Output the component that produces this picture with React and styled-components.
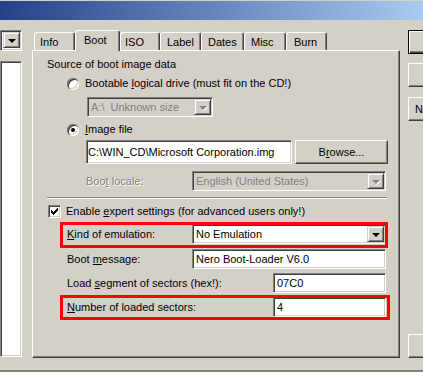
import React from 'react';
import styled, { createGlobalStyle, css } from 'styled-components';

const GlobalStyle = createGlobalStyle`
  html, body {
    margin: 0;
    padding: 0;
    background: #d4d0c8;
    overflow: hidden;
  }
  body {
    font-family: "Liberation Sans", Arial, sans-serif;
    font-size: 11px;
    color: #000;
  }
  * { box-sizing: border-box; }
`;

const sunken = css`
  border: 1px solid;
  border-color: #808080 #fff #fff #808080;
  box-shadow: inset 1px 1px #404040, inset -1px -1px #d4d0c8;
`;

const raised = css`
  border: 1px solid;
  border-color: #fff #404040 #404040 #fff;
  box-shadow: inset -1px -1px #808080;
`;

const Window = styled.div`
  width: 423px;
  height: 372px;
  display: flex;
  flex-direction: column;
  overflow: hidden;
`;

const TitleBar = styled.div`
  height: 20px;
  flex: none;
  border-top: 1px solid #d4d0c8;
  background: linear-gradient(to right, #24428a, #a6caf0);
`;

const Body = styled.div`
  display: flex;
  flex: none;
  padding-top: 10px;
`;

const Sidebar = styled.div`
  width: 22px;
  flex: none;
  display: flex;
  flex-direction: column;
`;

const DriveCombo = styled.div`
  ${sunken};
  height: 21px;
  padding: 1px;
  background: #fff;
  display: flex;
  justify-content: flex-end;
`;

const FileList = styled.div`
  ${sunken};
  flex: 1;
  margin-top: 10px;
  margin-bottom: 1px;
  background: #fff;
`;

const TabArea = styled.div`
  width: 368px;
  margin-left: 10px;
  flex: none;
  display: flex;
  flex-direction: column;
`;

const TabStrip = styled.div`
  height: 20px;
  display: flex;
  align-items: flex-end;
  padding-left: 2px;
  position: relative;
  z-index: 1;
`;

const Tab = styled.div`
  width: ${p => p.$w}px;
  height: ${p => (p.$active ? 21 : 18)}px;
  margin-bottom: ${p => (p.$active ? -1 : 0)}px;
  padding-left: ${p => p.$pad}px;
  padding-top: ${p => (p.$active ? 0 : 1)}px;
  padding-bottom: ${p => (p.$active ? 2 : 0)}px;
  display: flex;
  align-items: center;
  background: #d4d0c8;
  border: 1px solid;
  border-bottom: none;
  border-color: #fff #404040 transparent #fff;
  border-radius: 3px 3px 0 0;
  box-shadow: inset -1px 0 #808080;
  white-space: nowrap;
`;

const Panel = styled.div`
  height: 308px;
  border: 1px solid;
  border-color: #fff #404040 #404040 #fff;
  box-shadow: inset -1px -1px #808080;
  padding: 7px 11px 0 14px;
  display: flex;
  flex-direction: column;
`;

const Caption = styled.div`
  height: 13px;
  line-height: 13px;
`;

const Row = styled.div`
  position: relative;
  display: flex;
  align-items: center;
  margin-top: ${p => p.$top || 0}px;
  padding-left: ${p => p.$indent || 0}px;
  min-height: 13px;
  line-height: 13px;
  ${p => p.$mark && css`
    &::after {
      content: '';
      position: absolute;
      left: 13px;
      right: ${p.$mark.right}px;
      top: -2px;
      bottom: ${p.$mark.bottom}px;
      border: 3px solid #ff0000;
      pointer-events: none;
    }
  `}
`;

const Label = styled.span`
  width: ${p => (p.$w ? `${p.$w}px` : 'auto')};
  flex: none;
  white-space: nowrap;
  color: ${p => (p.$disabled ? '#808080' : '#000')};
  text-shadow: ${p => (p.$disabled ? '1px 1px 0 #fff' : 'none')};
`;

const Radio = styled.span`
  width: 12px;
  height: 12px;
  flex: none;
  margin-right: 6px;
  border-radius: 50%;
  background: #fff;
  position: relative;
  box-shadow: inset 1px 1px #808080, inset 2px 2px #404040,
    inset -1px -1px #fff, inset -2px -2px #d4d0c8;
  ${p => p.$checked && css`
    &::after {
      content: '';
      position: absolute;
      left: 4px;
      top: 4px;
      width: 4px;
      height: 4px;
      border-radius: 50%;
      background: #000;
    }
  `}
`;

const CheckBox = styled.span`
  ${sunken};
  width: 13px;
  height: 13px;
  flex: none;
  margin-right: 5px;
  background: #fff;
  display: flex;
`;

const Combo = styled.div`
  ${sunken};
  width: ${p => p.$w}px;
  height: 20px;
  flex: none;
  margin-left: ${p => p.$left || 0}px;
  padding: 1px;
  display: flex;
  align-items: center;
  background: ${p => (p.$disabled ? '#d4d0c8' : '#fff')};
`;

const ComboText = styled.span`
  flex: 1;
  padding-left: 2px;
  white-space: nowrap;
  overflow: hidden;
  color: ${p => (p.$disabled ? '#808080' : '#000')};
`;

const DropButton = styled.span`
  width: 17px;
  height: 16px;
  flex: none;
  display: flex;
  align-items: center;
  justify-content: center;
  background: #d4d0c8;
  border: 1px solid;
  border-color: #d4d0c8 #404040 #404040 #d4d0c8;
  box-shadow: inset 1px 1px #fff, inset -1px -1px #808080;
  &::before {
    content: '';
    width: 0;
    height: 0;
    margin-left: 1px;
    margin-top: 1px;
    border-left: 4px solid transparent;
    border-right: 4px solid transparent;
    border-top: 4px solid ${p => (p.$disabled ? '#808080' : '#000')};
    filter: ${p => (p.$disabled ? 'drop-shadow(1px 1px 0 #fff)' : 'none')};
  }
`;

const TextField = styled.div`
  ${sunken};
  width: ${p => p.$w}px;
  height: ${p => p.$h || 20}px;
  flex: none;
  padding: 0 ${p => p.$pad ?? 3}px;
  display: flex;
  align-items: center;
  background: #fff;
  white-space: nowrap;
  overflow: hidden;
`;

const PushButton = styled.div`
  ${raised};
  width: ${p => p.$w || 80}px;
  height: ${p => p.$h || 24}px;
  flex: none;
  margin-left: ${p => p.$left || 0}px;
  margin-top: ${p => (p.$top === 'auto' ? 'auto' : `${p.$top || 0}px`)};
  display: flex;
  align-items: center;
  justify-content: ${p => (p.$start ? 'flex-start' : 'center')};
  padding-left: ${p => (p.$start ? 6 : 0)}px;
  background: #d4d0c8;
  white-space: nowrap;
  ${p => p.$default && css`
    border-color: #000;
    box-shadow: inset 1px 1px #fff, inset -1px -1px #404040, inset -2px -2px #808080;
  `}
`;

const Separator = styled.div`
  width: 340px;
  margin-top: 6px;
  border-top: 1px solid #808080;
  border-bottom: 1px solid #fff;
`;

const ButtonColumn = styled.div`
  width: 80px;
  margin-left: 8px;
  flex: none;
  display: flex;
  flex-direction: column;
`;

const StatusLine = styled.div`
  height: 2px;
  margin-top: 12px;
  flex: none;
  background: #808080;
`;

const tabs = [
  { name: 'Info', w: 41, pad: 5 },
  { name: 'Boot', w: 45, pad: 8, active: true },
  { name: 'ISO', w: 40, pad: 4 },
  { name: 'Label', w: 41, pad: 6 },
  { name: 'Dates', w: 43, pad: 6 },
  { name: 'Misc', w: 42, pad: 6 },
  { name: 'Burn', w: 41, pad: 7 },
];

function CheckMark() {
  // classic 7x7 pixel tick
  const cols = [[2, 4], [3, 5], [4, 6], [5, 5], [6, 4], [7, 3], [8, 2]];
  return (
    <svg width="11" height="11" viewBox="0 0 11 11" shapeRendering="crispEdges">
      {cols.map(([x, y]) => (
        <rect key={x} x={x} y={y} width="1" height="3" fill="#000" />
      ))}
    </svg>
  );
}

export default function App() {
  return (
    <>
      <GlobalStyle />
      <Window>
        <TitleBar />
        <Body>
          <Sidebar>
            <DriveCombo>
              <DropButton />
            </DriveCombo>
            <FileList />
          </Sidebar>

          <TabArea>
            <TabStrip>
              {tabs.map(t => (
                <Tab key={t.name} $w={t.w} $pad={t.pad} $active={t.active}>{t.name}</Tab>
              ))}
            </TabStrip>
            <Panel>
              <Caption>Source of boot image data</Caption>
              <Row $top={6} $indent={20}>
                <Radio />
                <Label>Bootable <u>l</u>ogical drive (must fit on the CD!)</Label>
              </Row>
              <Row $top={7}>
                <Combo $w={126} $left={40} $disabled>
                  <ComboText $disabled>A:\&nbsp; Unknown size</ComboText>
                  <DropButton $disabled />
                </Combo>
              </Row>
              <Row $top={6} $indent={20}>
                <Radio $checked />
                <Label><u>I</u>mage file</Label>
              </Row>
              <Row $top={4} $indent={39}>
                <TextField $w={206} $h={24} $pad={1}>C:\WIN_CD\Microsoft Corporation.img</TextField>
                <PushButton $w={93} $left={3}>B<u>r</u>owse...</PushButton>
              </Row>
              <Row $top={7} $indent={39}>
                <Label $w={106} $disabled>Boo<u>t</u> locale:</Label>
                <Combo $w={194} $disabled>
                  <ComboText $disabled>English (United States)</ComboText>
                  <DropButton $disabled />
                </Combo>
              </Row>
              <Separator />
              <Row $top={6} $indent={1}>
                <CheckBox><CheckMark /></CheckBox>
                <Label>Enable <u>e</u>xpert settings (for advanced users only!)</Label>
              </Row>
              <Row $top={6} $indent={20} $mark={{ right: 0, bottom: -4 }}>
                <Label $w={125}><u>K</u>ind of emulation:</Label>
                <Combo $w={194}>
                  <ComboText>No Emulation</ComboText>
                  <DropButton />
                </Combo>
              </Row>
              <Row $top={5} $indent={20}>
                <Label $w={125}>Boot <u>m</u>essage:</Label>
                <TextField $w={194}>Nero Boot-Loader V6.0</TextField>
              </Row>
              <Row $top={4} $indent={20}>
                <Label $w={206}>Load <u>s</u>egment of sectors (hex!):</Label>
                <TextField $w={113}>07C0</TextField>
              </Row>
              <Row $top={4} $indent={20} $mark={{ right: -2, bottom: -3 }}>
                <Label $w={206}><u>N</u>umber of loaded sectors:</Label>
                <TextField $w={113}>4</TextField>
              </Row>
            </Panel>
          </TabArea>

          <ButtonColumn>
            <PushButton $default />
            <PushButton $top={9} />
            <PushButton $top={10} $start>New</PushButton>
            <PushButton $top="auto" />
          </ButtonColumn>
        </Body>
        <StatusLine />
      </Window>
    </>
  );
}
